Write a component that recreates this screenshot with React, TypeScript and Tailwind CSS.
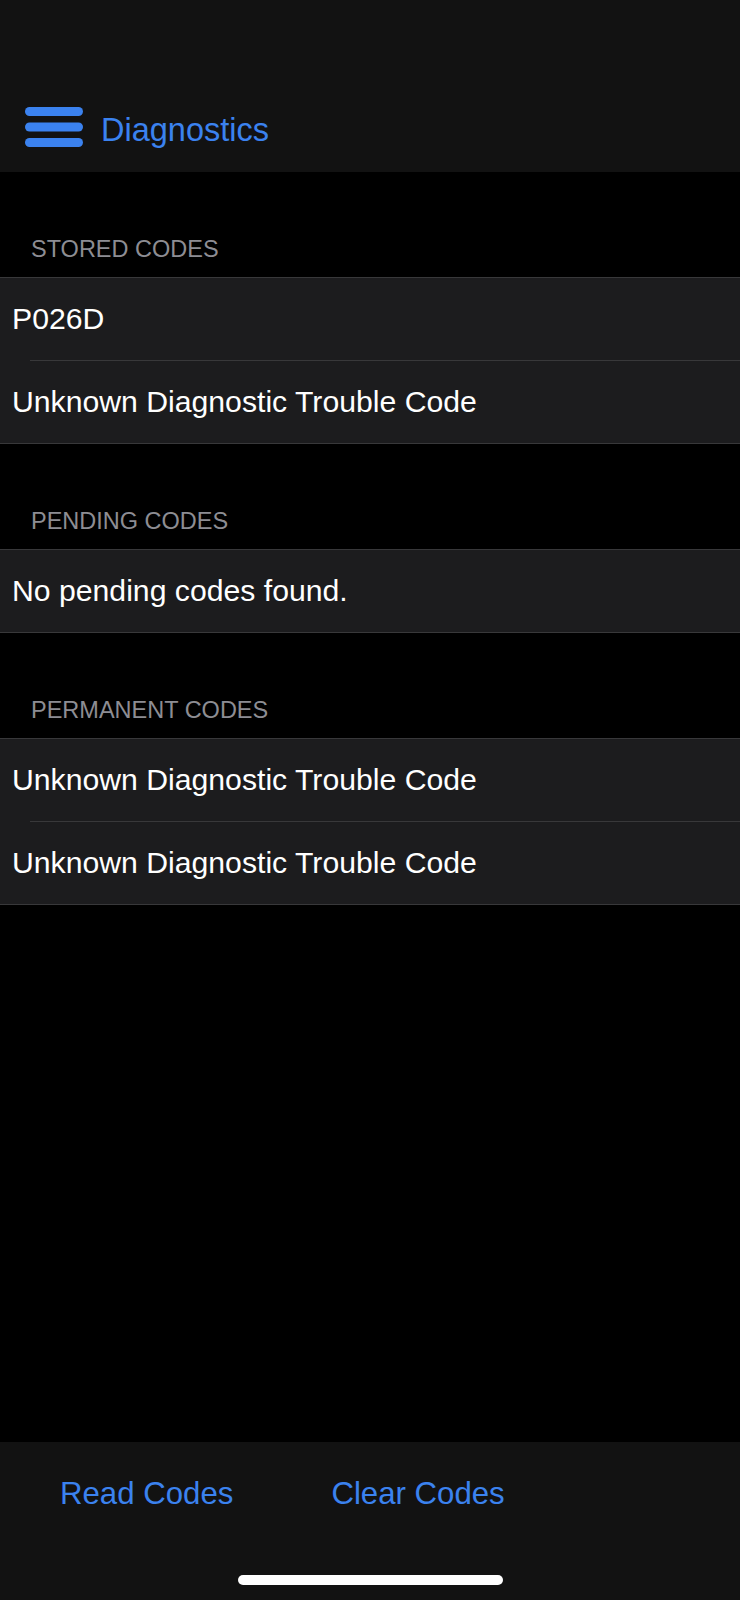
import React from 'react';

const sections = [
  { title: 'STORED CODES', rows: ['P026D', 'Unknown Diagnostic Trouble Code'] },
  { title: 'PENDING CODES', rows: ['No pending codes found.'] },
  { title: 'PERMANENT CODES', rows: ['Unknown Diagnostic Trouble Code', 'Unknown Diagnostic Trouble Code'] },
];

const MenuIcon = () => (
  <svg width="58" height="40" viewBox="0 0 58 40" className="shrink-0">
    <rect x="0" y="0" width="58" height="9" rx="4.5" fill="#3b82ef" />
    <rect x="0" y="15.5" width="58" height="9" rx="4.5" fill="#3b82ef" />
    <rect x="0" y="31" width="58" height="9" rx="4.5" fill="#3b82ef" />
  </svg>
);

const App = () => {
  return (
    <div className="h-[1600px] w-full flex flex-col bg-black font-['Liberation_Sans',Arial,sans-serif]">
      <header className="bg-[#121212] pt-[82px]">
        <div className="h-[90px] flex items-center pl-[25px] gap-[18px]">
          <MenuIcon />
          <span className="mt-[6px] text-[32.5px] leading-[40px] text-[#3b82ef]">Diagnostics</span>
        </div>
      </header>

      {sections.map((section, i) => (
        <section key={i}>
          <div className="h-[105px] flex items-end pb-[14px] pl-[31px]">
            <span className="text-[23.5px] leading-[28px] text-[#8d8d93]">{section.title}</span>
          </div>
          <div className="bg-[#1c1c1e] border-y border-[#38383a]">
            {section.rows.map((row, j) => (
              <div key={j}>
                {j > 0 && <div className="ml-[30px] h-px bg-[#38383a]" />}
                <div className="h-[82px] flex items-center pl-[12px]">
                  <span className="text-[30.2px] leading-[36px] text-white">{row}</span>
                </div>
              </div>
            ))}
          </div>
        </section>
      ))}

      <div className="flex-1" />

      <footer className="h-[158px] bg-[#121212] flex flex-col">
        <div className="pt-[37px] flex pl-[60px] gap-[98px]">
          <span className="text-[31.2px] leading-[30px] text-[#3b82ef]">Read Codes</span>
          <span className="text-[31.2px] leading-[30px] text-[#3b82ef]">Clear Codes</span>
        </div>
        <div className="mt-auto mb-[15px] mx-auto w-[265px] h-[10px] rounded-full bg-white" />
      </footer>
    </div>
  );
};

export default App;
